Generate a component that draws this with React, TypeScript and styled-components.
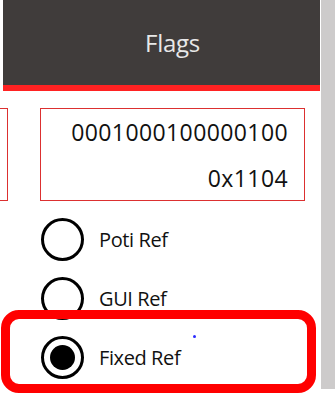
import React from 'react';
import styled, { createGlobalStyle } from 'styled-components';

const GlobalStyle = createGlobalStyle`
  html, body {
    margin: 0;
    padding: 0;
    background: #fff;
    overflow: hidden;
  }
  body {
    font-family: 'Open Sans', 'Noto Sans', sans-serif;
  }
`;

const Page = styled.div`
  display: flex;
  width: 335px;
  height: 396px;
`;

const Main = styled.div`
  width: 321px;
  display: flex;
  flex-direction: column;
  overflow: hidden;
`;

const Scrollbar = styled.div`
  width: 14px;
  height: 389px;
  background-color: #cdcbcb;
`;

const Header = styled.div`
  margin-left: 3px;
  width: 317px;
  height: 85px;
  background-color: #403c3b;
  display: flex;
  align-items: center;
  justify-content: center;
  padding-left: 22px;
  box-sizing: border-box;
`;

const HeaderTitle = styled.span`
  color: #e8e8e8;
  font-size: 24px;
  letter-spacing: -0.3px;
`;

const RedBar = styled.div`
  margin-left: 3px;
  width: 317px;
  height: 6px;
  background-color: #ff2222;
`;

const BoxRow = styled.div`
  display: flex;
  gap: 32px;
  margin-top: 17px;
`;

interface ValueBoxProps {
  $width: number;
  $offset?: number;
}

const ValueBox = styled.div<ValueBoxProps>`
  flex: none;
  width: ${p => p.$width}px;
  margin-left: ${p => p.$offset ?? 0}px;
  height: 93px;
  box-sizing: border-box;
  border: 1.5px solid #dc3030;
  display: flex;
  flex-direction: column;
  justify-content: center;
  align-items: flex-end;
  padding-right: 16px;
`;

const ValueLine = styled.div`
  font-size: 23px;
  line-height: 46px;
  letter-spacing: 0.4px;
  color: #111;
`;

const RadioList = styled.div`
  display: flex;
  flex-direction: column;
  margin-top: 9px;
`;

const RadioItem = styled.div`
  position: relative;
  height: 59px;
  display: flex;
  align-items: center;
  gap: 15px;
  padding-left: 41px;
`;

interface CircleProps {
  $checked?: boolean;
}

const RadioCircle = styled.div<CircleProps>`
  width: 43px;
  height: 43px;
  box-sizing: border-box;
  border: 3px solid #000;
  border-radius: 50%;
  display: flex;
  align-items: center;
  justify-content: center;
  background: #fff;

  &::after {
    content: '';
    display: ${p => (p.$checked ? 'block' : 'none')};
    width: 25px;
    height: 25px;
    border-radius: 50%;
    background: #000;
  }
`;

const RadioLabel = styled.span`
  font-size: 20px;
  color: #111;
  letter-spacing: -0.4px;
`;

const Highlight = styled.div`
  position: absolute;
  left: 1px;
  right: 5px;
  top: -18px;
  bottom: -6px;
  border: 9px solid #ff0000;
  border-radius: 18px;
  pointer-events: none;
`;

const CursorDot = styled.span`
  position: absolute;
  left: 193px;
  top: 7px;
  width: 3px;
  height: 3px;
  border-radius: 50%;
  background: #2b2bff;
`;

const options = [
  { label: 'Poti Ref', checked: false },
  { label: 'GUI Ref', checked: false },
  { label: 'Fixed Ref', checked: true },
];

export default function App() {
  return (
    <>
      <GlobalStyle />
      <Page>
        <Main>
          <Header>
            <HeaderTitle>Flags</HeaderTitle>
          </Header>
          <RedBar />
          <BoxRow>
            <ValueBox $width={208} $offset={-200} />
            <ValueBox $width={265}>
              <ValueLine>0001000100000100</ValueLine>
              <ValueLine>0x1104</ValueLine>
            </ValueBox>
          </BoxRow>
          <RadioList>
            {options.map(opt => (
              <RadioItem key={opt.label}>
                <RadioCircle $checked={opt.checked} />
                <RadioLabel>{opt.label}</RadioLabel>
                {opt.checked && (
                  <>
                    <Highlight />
                    <CursorDot />
                  </>
                )}
              </RadioItem>
            ))}
          </RadioList>
        </Main>
        <Scrollbar />
      </Page>
    </>
  );
}
